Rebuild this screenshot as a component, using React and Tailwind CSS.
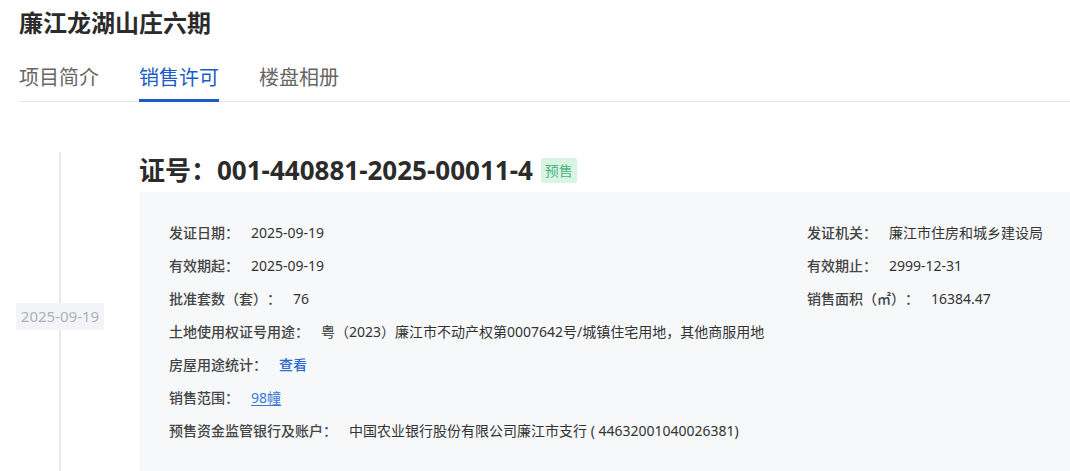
import React from "react";

const Row = ({ label, children, className = "" }) => (
  <div className={"flex items-center h-[33px] " + className}>
    <span className="text-[#444] font-medium">{label}</span>
    <span className="ml-[12px] text-[#333]">{children}</span>
  </div>
);

export default function App() {
  return (
    <div
      className="w-[1070px] h-[471px] overflow-hidden bg-white text-[#333] [text-spacing-trim:space-all]"
      style={{ fontFamily: '"Noto Sans", "Noto Sans CJK SC", sans-serif' }}
    >
      <div className="pl-[19px]">
        <h1 className="pt-[7px] text-[24px] leading-[32px] font-bold text-[#2b2b2b]">
          廉江龙湖山庄六期
        </h1>
        <div className="mt-[17px] flex border-b border-[#e5e6ea]">
          <div className="pt-[8px] pb-[7px] border-b-[3px] border-transparent -mb-px text-[20px] leading-[28px] text-[#666]">
            项目简介
          </div>
          <div className="ml-[40px] pt-[8px] pb-[7px] border-b-[3px] border-[#1a5cc6] -mb-px text-[20px] leading-[28px] text-[#1a5cc6]">
            销售许可
          </div>
          <div className="ml-[40px] pt-[8px] pb-[7px] border-b-[3px] border-transparent -mb-px text-[20px] leading-[28px] text-[#666]">
            楼盘相册
          </div>
        </div>
      </div>

      <div className="flex mt-[50px]">
        <div className="relative w-[120px] shrink-0 flex flex-col items-center">
          <div className="absolute left-[59px] top-0 h-[400px] w-[2px] bg-[#e8e9ee]" />
          <div className="relative mt-[151px] h-[27px] px-[5px] flex items-center bg-[#f3f4f7] text-[15px] text-[#aeb1b7]">
            2025-09-19
          </div>
        </div>
        <div className="ml-[19px] flex-1 min-w-0">
          <div className="flex items-center h-[36px]">
            <h2 className="text-[26px] leading-[36px] font-bold text-[#2b2b2b] whitespace-nowrap">
              证号：001-440881-2025-00011-4
            </h2>
            <span className="ml-[8px] h-[25px] px-[4px] flex items-center rounded-[2px] bg-[#d9f4e5] text-[14px] text-[#4bb67c]">
              预售
            </span>
          </div>
          <div className="mt-[4px] w-[1000px] h-[300px] bg-[#f7f8fa] pl-[30px] pt-[24px] text-[14px] whitespace-nowrap">
            <div className="flex">
              <div className="w-[638px]">
                <Row label="发证日期：">2025-09-19</Row>
                <Row label="有效期起：">2025-09-19</Row>
                <Row label="批准套数（套）：">76</Row>
              </div>
              <div>
                <Row label="发证机关：">廉江市住房和城乡建设局</Row>
                <Row label="有效期止：">2999-12-31</Row>
                <Row
                  label={
                    <>
                      销售面积（<span className="inline-block w-[14px] text-center">㎡</span>）：
                    </>
                  }
                >
                  16384.47
                </Row>
              </div>
            </div>
            <Row label="土地使用权证号用途：">
              粤（2023）廉江市不动产权第0007642号/城镇住宅用地，其他商服用地
            </Row>
            <Row label="房屋用途统计：">
              <span className="text-[#2a6ad0] font-medium">查看</span>
            </Row>
            <Row label="销售范围：">
              <span className="text-[#3a78d8] underline underline-offset-2">98幢</span>
            </Row>
            <Row label="预售资金监管银行及账户：">
              中国农业银行股份有限公司廉江市支行 ( 44632001040026381)
            </Row>
          </div>
        </div>
      </div>
    </div>
  );
}
